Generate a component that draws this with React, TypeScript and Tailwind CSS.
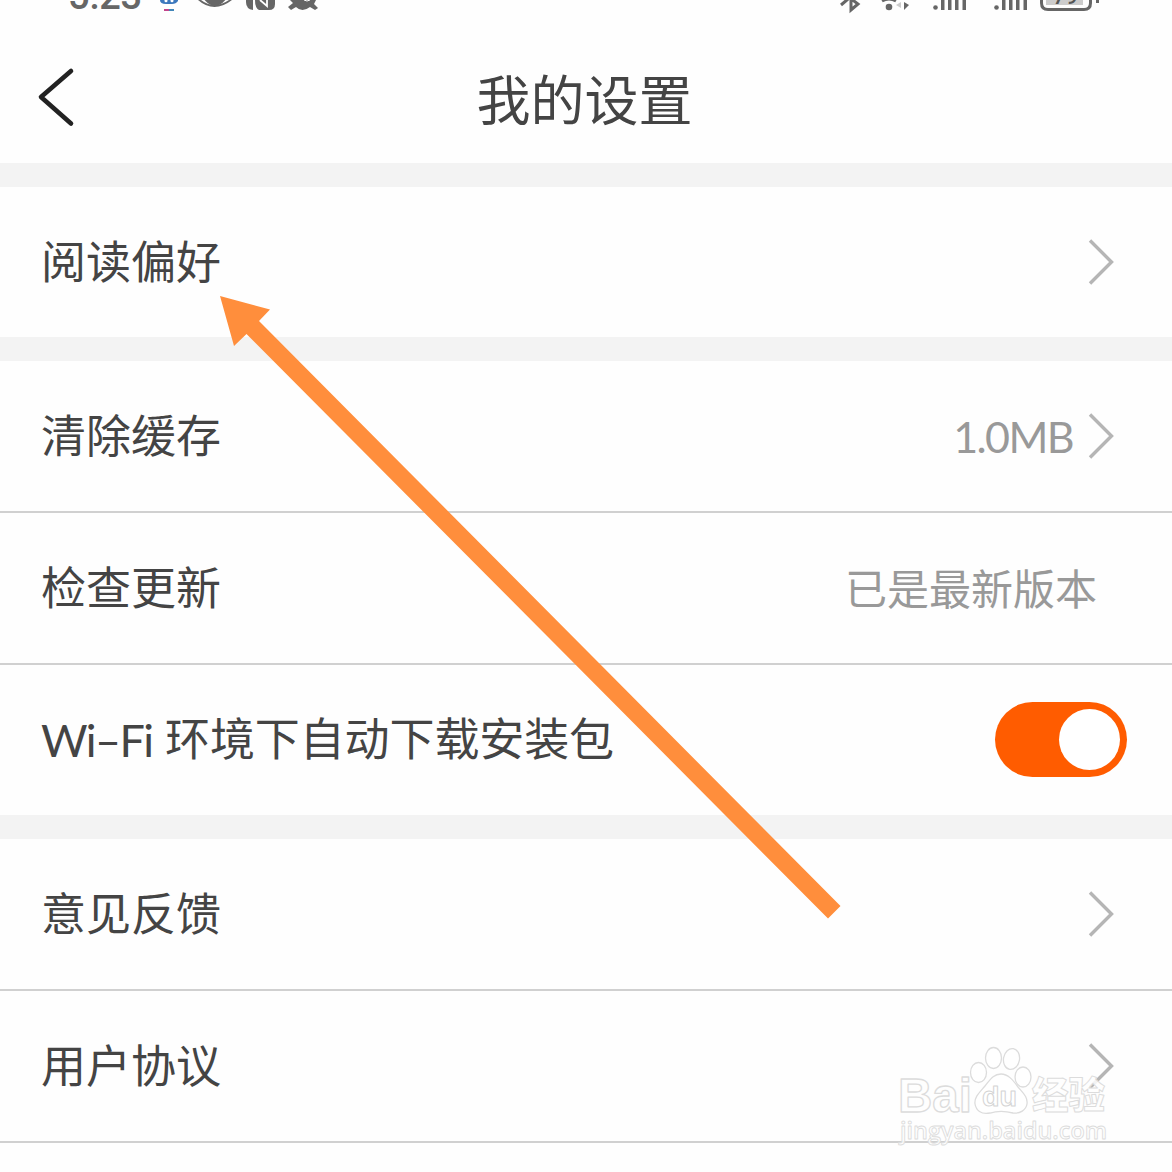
import React from "react";

const Chevron = () => (
  <svg className="block h-[52px] w-[30px]" viewBox="0 0 30 52" fill="none">
    <path d="M4 4.500L25.500 26L4 47.500" stroke="#b5b5b5" strokeWidth="3.400" />
  </svg>
);

const Band = () => <div className="h-6 shrink-0 bg-[#f3f3f3]" />;
const Line = () => <div className="h-0.5 shrink-0 bg-[#d0d0d0]" />;

type RowProps = { label: React.ReactNode; children?: React.ReactNode };

const Row = ({ label, children }: RowProps) => (
  <div className="flex h-[150px] shrink-0 items-center justify-between pl-[41px] pr-[56px]">
    <span className="mb-[5px] flex items-baseline whitespace-pre text-[45px] leading-none text-[#444]">{label}</span>
    <div className="flex items-center">{children}</div>
  </div>
);

const StatusBar = () => (
  <div className="flex h-[14px] justify-between overflow-hidden text-[#666]">
    <div className="flex pl-[68px]">
      <span className="-mt-[27px] block w-[96px] font-['Roboto'] text-[38px] font-medium leading-[46px] tracking-[-0.2px]">5:23</span>
      <svg className="h-[14px] w-[160px] shrink-0 overflow-visible" viewBox="164 0 160 14">
        <path d="M160 0H178V1Q176 4 172 4H166Q160 4 160 0Z" fill="#3c78bd" />
        <circle cx="166" cy="0.800" r="1.500" fill="#fff" />
        <circle cx="172" cy="0.800" r="1.500" fill="#fff" />
        <path d="M164 10H169" stroke="#c3458c" strokeWidth="2" />
        <path d="M169 10H174" stroke="#4286b8" strokeWidth="2" />
        <path d="M198 0Q214 14 232 0H229Q214 10 201 0Z" fill="#666" />
        <path d="M203 -2H227Q215 14 203 -2Z" fill="#666" />
        <path d="M246 0H253V10Q246 9 246 2Z" fill="#666" />
        <path d="M255 0H275V4Q275 10 269 10H259Q255 8 255 0Z" fill="#666" />
        <path d="M260 0L267 6V0" fill="none" stroke="#fff" strokeWidth="1.800" />
        <path d="M290 0H316L314 4L318 8L315 10L310 7Q302 13 296 7L291 10L288 7L293 3Z" fill="#666" />
        <path d="M304 0L307 1L310 0" fill="none" stroke="#fff" strokeWidth="1" />
      </svg>
    </div>
    <svg className="h-[14px] w-[342px]" viewBox="830 0 342 14">
      <g fill="none" stroke="#666" strokeWidth="3">
        <path d="M841 5L848 -1M851 -2V10L858 4L850 -2" />
        <path d="M882 1Q889 -3 896 1" />
        <path d="M1041.500 0V3Q1041.500 9.500 1048 9.500H1084Q1090.500 9.500 1090.500 3V0" />
      </g>
      <circle cx="889" cy="7" r="3.300" fill="#666" />
      <path d="M901 2V8L896 5Z" fill="#ccc" />
      <path d="M904 2L909 5L904 10Z" fill="#666" />
      <g fill="#666">
        <circle cx="935.500" cy="7.500" r="2.300" /><path d="M941 0h3.500v10h-3.500zM948 0h3.500v10h-3.500zM955 0h3.500v10h-3.500zM962.500 0h3.500v10h-3.500z" />
        <circle cx="996.500" cy="7.500" r="2.300" /><path d="M1002 0h3.500v10h-3.500zM1009 0h3.500v10h-3.500zM1016 0h3.500v10h-3.500zM1023.500 0h3.500v10h-3.500z" />
        <path d="M1096 0h3v3h-3z" />
      </g>
      <path d="M1046 0H1083V5H1046Z" fill="#ccc" />
      <text x="1053" y="4" fontFamily="Roboto" fontSize="22" fontWeight="500" fill="#555">79</text>
    </svg>
  </div>
);

const Watermark = () => (
  <svg
    className="pointer-events-none absolute left-[890px] top-[1036px] h-[120px] w-[230px]"
    viewBox="890 1036 230 120"
    fill="#fff"
    fillOpacity="0.85"
    stroke="#dcdcdc"
    strokeWidth="1.300"
    strokeLinejoin="round"
  >
    <text x="898" y="1112" fontFamily="Liberation Sans" fontWeight="700" fontSize="48" textLength="74" lengthAdjust="spacingAndGlyphs">Bai</text>
    <ellipse cx="978.500" cy="1072.500" rx="8" ry="10" />
    <ellipse cx="993.500" cy="1058" rx="8" ry="10.500" />
    <ellipse cx="1011.500" cy="1059" rx="8" ry="10.500" transform="rotate(10 1011.500 1059)" />
    <ellipse cx="1023" cy="1077" rx="8" ry="10" />
    <path d="M1001 1074C1008 1074 1013 1080 1018 1087C1023 1093 1028 1097 1027 1104C1026 1110 1020 1114 1013 1113C1005 1111 997 1111 990 1113C981 1115 976 1110 975 1104C974 1097 980 1092 985 1086C990 1080 993 1074 1001 1074Z" />
    <text x="982" y="1106" fontFamily="Liberation Sans" fontWeight="700" fontSize="28" textLength="35" lengthAdjust="spacingAndGlyphs" stroke="#d4d4d4" strokeWidth="1">du</text>
    <text x="1032" y="1109" fontFamily="Noto Sans CJK SC" fontWeight="900" fontSize="37" textLength="73" lengthAdjust="spacingAndGlyphs" strokeWidth="1">经验</text>
    <text x="900" y="1139" fontFamily="Open Sans" fontWeight="600" fontSize="24" textLength="207" lengthAdjust="spacingAndGlyphs" strokeWidth="0.900">jingyan.baidu.com</text>
  </svg>
);

export default function App() {
  return (
    <div className="relative flex h-[1172px] w-[1172px] flex-col overflow-hidden bg-[#fefefe] font-['Noto_Sans_CJK_SC',sans-serif]">
      <header className="h-[163px] shrink-0">
        <StatusBar />
        <div className="grid grid-cols-[1fr_auto_1fr] items-start pt-[50px]">
          <svg className="ml-[34px] h-[64px] w-[46px]" viewBox="0 0 46 64" fill="none">
            <path d="M37 7L7 33L37 59.500" stroke="#222" strokeWidth="4.600" strokeLinecap="round" strokeLinejoin="round" />
          </svg>
          <h1 className="mr-[3px] mt-[7px] text-[54px] leading-none text-[#444]">我的设置</h1>
        </div>
      </header>
      <Band />
      <Row label="阅读偏好"><Chevron /></Row>
      <Band />
      <Row label="清除缓存">
        <span className="mr-[13px] font-['Lato'] text-[43px] leading-none tracking-[-1.6px] text-[#999]">1.0MB</span>
        <Chevron />
      </Row>
      <Line />
      <Row label="检查更新">
        <span className="mb-[3px] mr-[19px] text-[42px] leading-none text-[#999]">已是最新版本</span>
      </Row>
      <Line />
      <Row label={<><span className="relative top-px inline-block w-[124px] font-['Lato'] tracking-[-1.6px]">Wi–Fi</span><span className="tracking-[-0.1px]">环境下自动下载安装包</span></>}>
        <div className="-mr-[11px] mb-[2px] flex h-[75px] w-[132px] items-center justify-end rounded-full bg-[#ff5c00] pr-[7px]">
          <div className="size-[61px] rounded-full bg-white" />
        </div>
      </Row>
      <Band />
      <Row label="意见反馈"><Chevron /></Row>
      <Line />
      <Row label="用户协议"><Chevron /></Row>
      <Line />
      <svg className="pointer-events-none absolute left-[200px] top-[280px] h-[660px] w-[660px]" viewBox="200 280 660 660">
        <path d="M220 296L270 309.500L259 321L840.500 906L828 918.500L246.500 334L234 346Z" fill="#ff8e3c" />
      </svg>
      <Watermark />
    </div>
  );
}
